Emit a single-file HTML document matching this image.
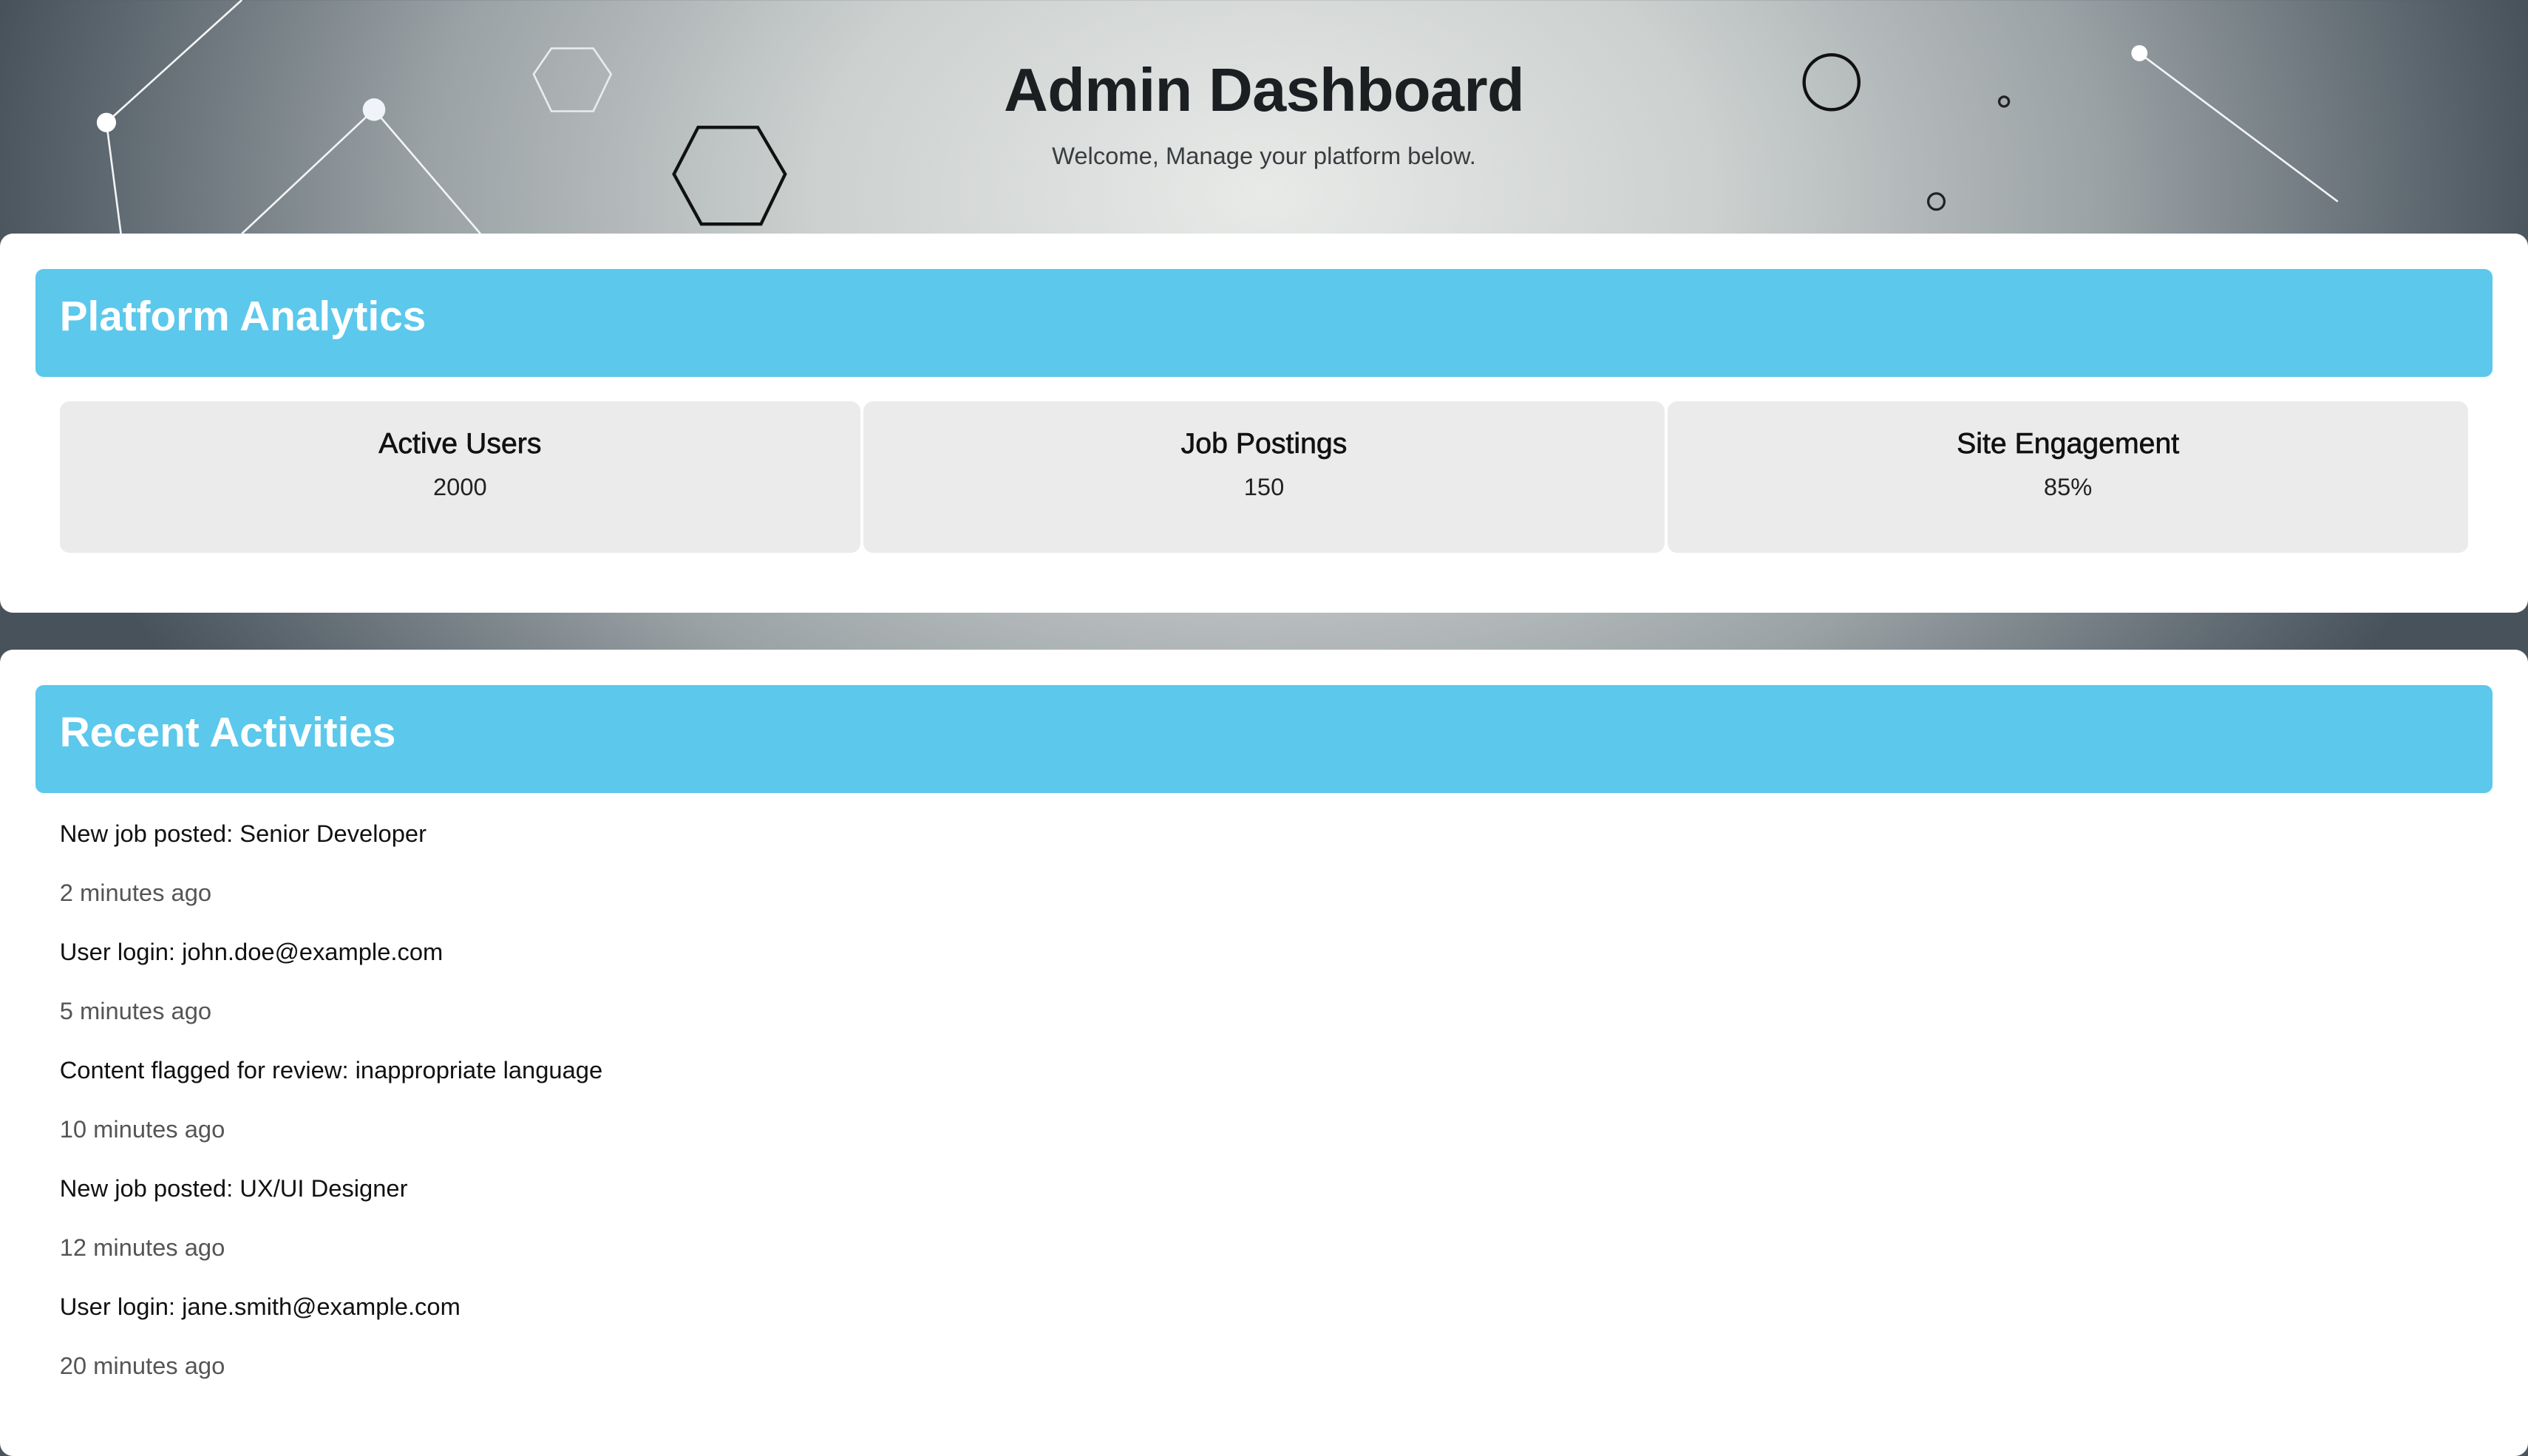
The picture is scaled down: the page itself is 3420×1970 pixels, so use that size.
<!DOCTYPE html>
<html><head><meta charset="utf-8"><style>
html{zoom:2.18112}
body{margin:0;width:1568px;height:867px;overflow:hidden;font-family:"Liberation Sans",sans-serif;
background:radial-gradient(ellipse 800px 550px at 784px 120px,#e8eae8 0%,#ccd0cf 35%,#9aa2a5 65%,#5e6870 90%,#48525b 100%);position:relative}
.hdr{height:145px;text-align:center;position:relative}
.hdr h1{margin:0;padding-top:34px;font-size:38px;font-weight:bold;color:#1c1f22;line-height:44px;letter-spacing:-0.3px}
.hdr p{margin:10px 0 0;font-size:15px;color:#3a3d40}
.card{position:absolute;left:0;right:0;background:#fff;border-radius:8px}
.bar{position:absolute;left:22px;right:22px;height:67px;background:#5bc8ec;border-radius:5px;color:#fff;font-size:26px;font-weight:bold;line-height:60px;padding-left:15px;box-sizing:border-box}
.stats{position:absolute;left:37px;right:37px;top:104px;height:94px;display:flex;gap:2px}
.stat{flex:1;background:#ebebeb;border-radius:6px;text-align:center}
.stat h3{margin:16px 0 0;font-size:18px;font-weight:normal;color:#111;-webkit-text-stroke:0.3px #111}
.stat div{margin-top:8px;font-size:15px;color:#222}
.list{position:absolute;left:37px;top:104px;font-size:15px;color:#111}
.list div{height:36.7px;line-height:20px}
.list .t{color:#555}
</style></head><body>
<svg style="position:absolute;left:0;top:0" width="1568" height="145">
<g stroke="#f3f5f6" stroke-width="1.2" fill="none"><line x1="66" y1="76" x2="150" y2="0"/><line x1="66" y1="76" x2="75" y2="145"/><line x1="232" y1="68" x2="150" y2="145"/><line x1="232" y1="68" x2="298" y2="145"/><line x1="1327" y1="33" x2="1450" y2="125"/>
<polygon points="342,30 368,30 379,46 368,69 342,69 331,46" stroke="#e8ecef"/></g>
<circle cx="66" cy="76" r="6" fill="#fff"/><circle cx="232" cy="68" r="7" fill="#f0f4f8"/><circle cx="1327" cy="33" r="5" fill="#fff"/>
<polygon points="433,79 470,79 487,108 472,139 435,139 418,108" fill="none" stroke="#111" stroke-width="2"/>
<circle cx="1136" cy="51" r="17" fill="none" stroke="#111" stroke-width="2"/><circle cx="1201" cy="125" r="5" fill="none" stroke="#222" stroke-width="1.5"/><circle cx="1243" cy="63" r="3" fill="none" stroke="#222" stroke-width="1.5"/>
</svg>
<div class="hdr"><h1>Admin Dashboard</h1><p>Welcome, Manage your platform below.</p></div>
<div class="card" style="top:145px;height:235px">
<div class="bar" style="top:22px">Platform Analytics</div>
<div class="stats"><div class="stat"><h3>Active Users</h3><div>2000</div></div><div class="stat"><h3>Job Postings</h3><div>150</div></div><div class="stat"><h3>Site Engagement</h3><div>85%</div></div></div>
</div>
<div class="card" style="top:403px;height:500px">
<div class="bar" style="top:22px">Recent Activities</div>
<div class="list">
<div>New job posted: Senior Developer</div><div class="t">2 minutes ago</div>
<div>User login: john.doe@example.com</div><div class="t">5 minutes ago</div>
<div>Content flagged for review: inappropriate language</div><div class="t">10 minutes ago</div>
<div>New job posted: UX/UI Designer</div><div class="t">12 minutes ago</div>
<div>User login: jane.smith@example.com</div><div class="t">20 minutes ago</div>
</div></div>
</body></html>
